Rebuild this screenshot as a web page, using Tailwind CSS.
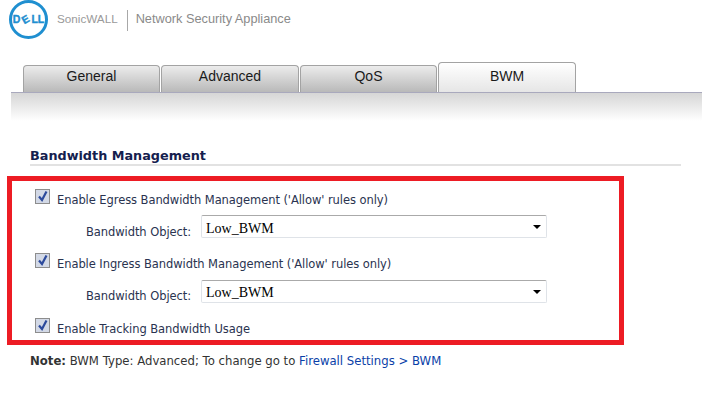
<!DOCTYPE html>
<html lang="en">
<head>
    <meta charset="UTF-8">
    <title>BWM - Network Security Appliance</title>
    <script src="https://cdn.jsdelivr.net/npm/@tailwindcss/browser@4"></script>
</head>
<body class="bg-white w-[713px] h-[407px] overflow-hidden font-['DejaVu_Sans',sans-serif]">
    <!-- Header -->
    <header class="h-[62px] flex items-start pl-[9px] font-['Liberation_Sans',sans-serif]">
        <div class="w-[39px] h-[39px] rounded-full border-[3px] border-[#1f8fd0] flex items-center justify-center">
            <span class="text-[#1f8fd0] text-[10.5px] leading-none font-bold [-webkit-text-stroke:0.4px_#1f8fd0] font-['Liberation_Sans',sans-serif]">D<span class="inline-block mx-[2px] -rotate-[30deg]">E</span>LL</span>
        </div>
        <span class="ml-[9px] mt-[11px] text-[11.7px] leading-[16px] text-[#9a9a9a]">SonicWALL</span>
        <div class="ml-[9px] mt-[10px] w-px h-[21px] bg-[#a8a8a8]"></div>
        <span class="ml-[8px] mt-[10px] text-[12.75px] leading-[18px] text-[#8a8a8a]">Network Security Appliance</span>
    </header>

    <!-- Tabs -->
    <nav class="h-[30px] pl-[23px] flex items-end gap-px text-[14px] font-['Liberation_Sans',sans-serif] text-[#1a1a1a]">
        <a class="w-[137px] h-[27px] text-center rounded-t-[4px] border border-b-0 border-[#a3a3a3] bg-gradient-to-b from-[#ececec] to-[#b9b9b9]">General</a>
        <a class="w-[138px] h-[27px] text-center rounded-t-[4px] border border-b-0 border-[#a3a3a3] bg-gradient-to-b from-[#ececec] to-[#b9b9b9]">Advanced</a>
        <a class="w-[137px] h-[27px] text-center rounded-t-[4px] border border-b-0 border-[#a3a3a3] bg-gradient-to-b from-[#ececec] to-[#b9b9b9]">QoS</a>
        <a class="w-[138px] h-[30px] pt-[3px] text-center rounded-t-[4px] border border-b-0 border-[#a3a3a3] bg-gradient-to-b from-white to-[#e6e6e6]">BWM</a>
    </nav>
    <div class="ml-[11px] w-[691px] h-[29px] border-t border-[#a9a9bd] bg-gradient-to-b from-[#d6d6d6] to-white"></div>

    <!-- Section -->
    <main class="pt-[27px]">
        <h2 class="ml-[30px] w-[651px] h-[15px] box-content border-b-2 border-[#e2e2e2] pb-[1px] text-[12.8px] leading-[16px] font-bold text-[#14204e]">Bandwidth Management</h2>

        <div class="ml-[7px] mt-[10px] w-[617px] h-[169px] border-[5px] border-[#ed1c24] pl-[23px] text-[11.5px] tracking-[-0.07px] text-[#2a3350]">
            <label class="h-[17px] mt-[7px] flex items-center gap-[7px]">
                <svg class="w-[15px] h-[15px]" viewBox="0 0 15 15"><rect x=".5" y=".5" width="14" height="14" fill="#d3d9e6" stroke="#8d8d8d"/><path d="M4 7.5l3 3.5L11.5 2.5" fill="none" stroke="#2c4a9c" stroke-width="2.2"/></svg>
                <span class="pt-[9px]">Enable Egress Bandwidth Management ('Allow' rules only)</span>
            </label>
            <div class="h-[23px] mt-[10px] flex items-center">
                <span class="w-[166px] pl-[51px] pt-[12px]">Bandwidth Object:</span>
                <div class="relative w-[346px] h-[23px] font-['Liberation_Serif',serif] text-[14px] tracking-normal text-black">
                    <select class="appearance-none w-full h-full pl-[4px] pt-[2px] rounded-[2px] border border-[#dfe3e8] border-t-[#aaaaaa]"><option>Low_BWM</option></select>
                    <span class="absolute right-[6px] top-[10px] border-x-[4px] border-t-[4px] border-x-transparent border-t-black"></span>
                </div>
            </div>
            <label class="h-[17px] mt-[14px] flex items-center gap-[7px]">
                <svg class="w-[15px] h-[15px]" viewBox="0 0 15 15"><rect x=".5" y=".5" width="14" height="14" fill="#d3d9e6" stroke="#8d8d8d"/><path d="M4 7.5l3 3.5L11.5 2.5" fill="none" stroke="#2c4a9c" stroke-width="2.2"/></svg>
                <span class="pt-[9px]">Enable Ingress Bandwidth Management ('Allow' rules only)</span>
            </label>
            <div class="h-[23px] mt-[11px] flex items-center">
                <span class="w-[166px] pl-[51px] pt-[10px]">Bandwidth Object:</span>
                <div class="relative w-[346px] h-[23px] font-['Liberation_Serif',serif] text-[14px] tracking-normal text-black">
                    <select class="appearance-none w-full h-full pl-[4px] pt-[1px] rounded-[2px] border border-[#dfe3e8] border-t-[#aaaaaa]"><option>Low_BWM</option></select>
                    <span class="absolute right-[6px] top-[10px] border-x-[4px] border-t-[4px] border-x-transparent border-t-black"></span>
                </div>
            </div>
            <label class="h-[17px] mt-[14px] flex items-center gap-[7px]">
                <svg class="w-[15px] h-[15px]" viewBox="0 0 15 15"><rect x=".5" y=".5" width="14" height="14" fill="#d3d9e6" stroke="#8d8d8d"/><path d="M4 7.5l3 3.5L11.5 2.5" fill="none" stroke="#2c4a9c" stroke-width="2.2"/></svg>
                <span class="pt-[9px]">Enable Tracking Bandwidth Usage</span>
            </label>
        </div>

        <p class="ml-[30px] mt-[7px] text-[11.7px] leading-[18px] text-[#333]"><b>Note:</b> BWM Type: Advanced; To change go to <a class="text-[#0b3fa8]">Firewall Settings &gt; BWM</a></p>
    </main>
</body>
</html>
